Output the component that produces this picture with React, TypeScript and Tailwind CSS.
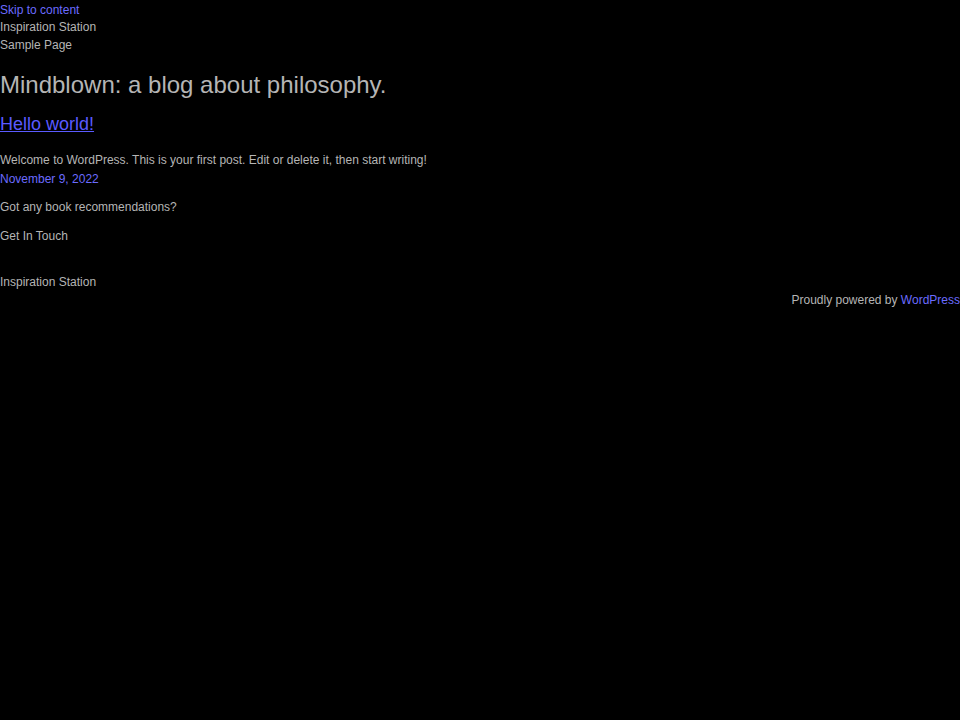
export default function App() {
  return (
    <div className="min-h-[720px] bg-black pt-[1.5px] font-['Liberation_Sans',Arial,sans-serif] text-[12px] text-[#b5b5b5]">
      <a href="#main" className="block leading-[17.5px] text-[#6b6bff]">
        Skip to content
      </a>
      <header>
        <p className="leading-[17.5px]">Inspiration Station</p>
        <nav>
          <ul>
            <li className="leading-[17.5px]">Sample Page</li>
          </ul>
        </nav>
      </header>

      <main id="main">
        <h1 className="mt-[17px] text-[24px] leading-[28px]">
          Mindblown: a blog about philosophy.
        </h1>
        <h2 className="mt-[14.5px] text-[18px] leading-[21px]">
          <a href="#" className="text-[#5a5aff] underline">
            Hello world!
          </a>
        </h2>
        <p className="mt-[16.5px] leading-[18px]">
          Welcome to WordPress. This is your first post. Edit or delete it, then start writing!
        </p>
        <a href="#" className="mt-[1px] block leading-[18px] text-[#6b6bff]">
          November 9, 2022
        </a>
        <p className="mt-[10px] leading-[18px]">Got any book recommendations?</p>
        <p className="mt-[11px] leading-[18px]">Get In Touch</p>
      </main>

      <footer className="mt-[28px]">
        <p className="leading-[18px]">Inspiration Station</p>
        <p className="text-right leading-[18px]">
          Proudly powered by{" "}
          <a href="#" className="text-[#6b6bff]">
            WordPress
          </a>
        </p>
      </footer>
    </div>
  );
}
